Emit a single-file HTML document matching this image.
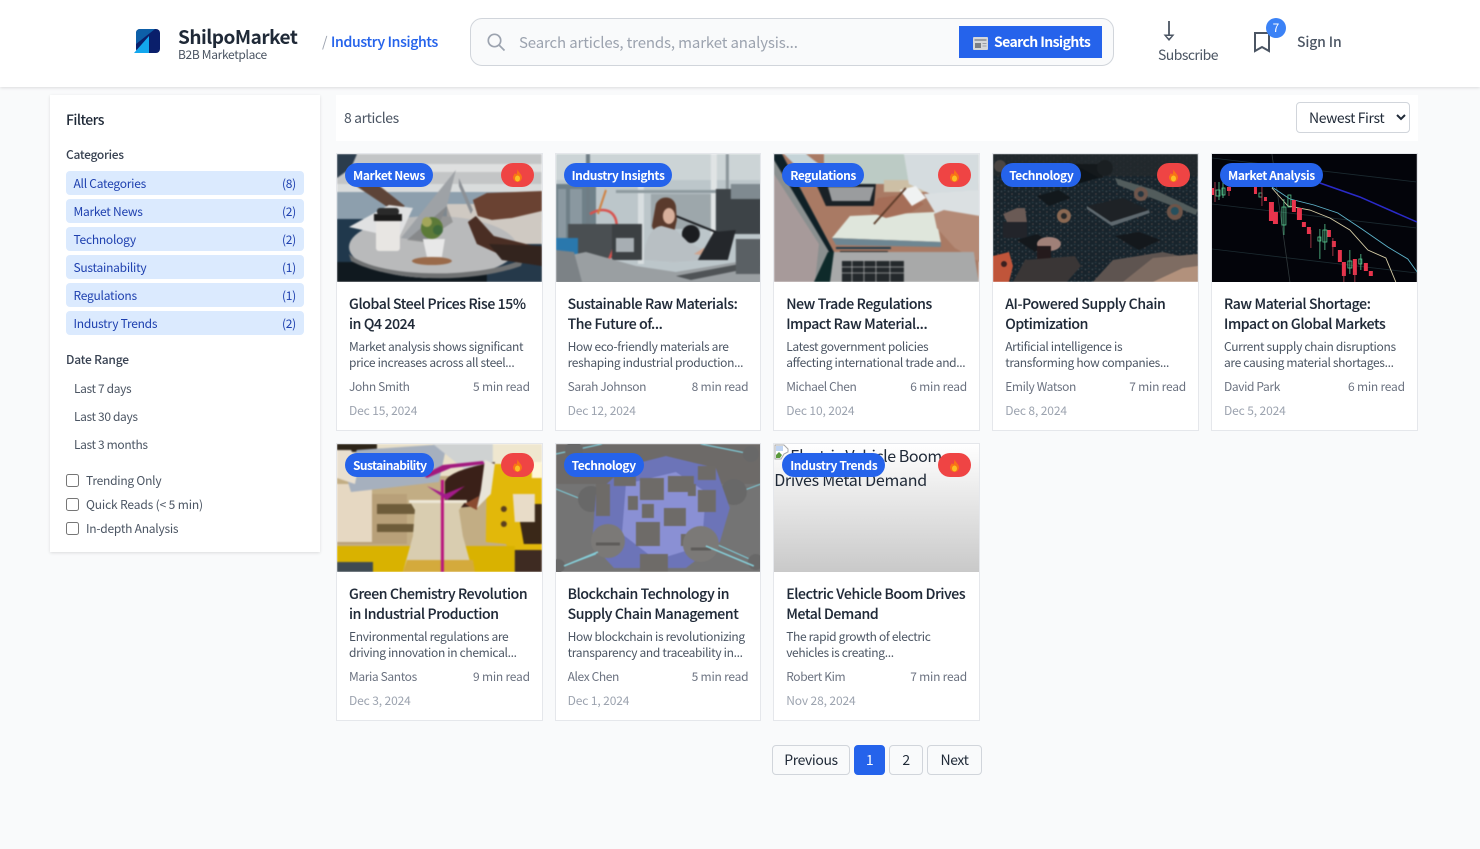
<!DOCTYPE html>
<html lang="en"><head><meta charset="utf-8"><title>Industry Insights - ShilpoMarket</title>
<style>
*{box-sizing:border-box}
html,body{margin:0;padding:0}
body{width:1480px;height:849px;overflow:hidden;position:relative;background:#f9fafb;font-family:"Noto Sans CJK JP","Liberation Sans",sans-serif;color:#1f2937}
.t{position:absolute;white-space:nowrap;line-height:20px}
.hdr{position:absolute;left:0;top:0;width:1480px;height:87px;background:#fff;box-shadow:0 1px 3px rgba(0,0,0,.12)}
.side{position:absolute;left:50px;top:95px;width:270px;height:457px;background:#fff;box-shadow:0 1px 3px rgba(0,0,0,.12)}
.cat{position:absolute;left:66px;width:238px;height:24px;background:#dbeafe;border-radius:4px;color:#1e40af;font-size:12px;line-height:26px;padding:0 8px 0 7.5px;display:flex;justify-content:space-between;letter-spacing:-.25px}
.date{position:absolute;left:74px;font-size:12px;line-height:20px;color:#4b5563;letter-spacing:-.36px}
.lbl{position:absolute;left:86px;font-size:12px;line-height:20px;color:#4b5563;letter-spacing:-.24px}
input[type=checkbox]{position:absolute;left:66px;margin:0;width:13px;height:13px}
.bar{position:absolute;left:336px;top:95px;width:1082px;height:46px;background:#fff}
select{position:absolute;left:1296px;top:102px;width:114px;height:31px;font-size:14px;letter-spacing:-.4px;font-family:inherit;background:#fff;border:1px solid #d1d5db;border-radius:4px;padding:0 0 0 8px;color:#1f2937}
.card{position:absolute;width:206.8px;height:278px;background:#fff;border:1px solid #e5e7eb}
.card svg.ph{position:absolute;left:0;top:0;width:100%;height:128px;display:block}
.img8{position:absolute;left:0;top:0;width:100%;height:128px;background:linear-gradient(#fff,#c9c9c9);overflow:hidden;font-size:16px;line-height:24px;color:#1f2937;letter-spacing:-.26px}
.pill{position:absolute;left:8px;top:9px;height:24px;border-radius:12px;background:#2563eb;color:#fff;font-size:12px;font-weight:700;line-height:25px;padding:0 8px;white-space:nowrap;letter-spacing:-.4px}
.fire{position:absolute;right:8px;top:9px;width:33px;height:24px;border-radius:12px;background:#ef4444}
.fire svg{position:absolute;left:11px;top:6px;width:11px;height:13px}
.ti{position:absolute;left:12px;white-space:nowrap;font-size:14px;font-weight:500;line-height:20px;color:#1f2937;letter-spacing:-.36px;-webkit-text-stroke:.12px #1f2937}
.de{position:absolute;left:12px;white-space:nowrap;font-size:12px;line-height:16px;color:#4b5563;letter-spacing:-.33px}
.au{position:absolute;left:12px;white-space:nowrap;font-size:12px;line-height:16px;color:#6b7280;top:225px;letter-spacing:-.38px}
.rd{position:absolute;right:12px;white-space:nowrap;font-size:12px;line-height:16px;color:#6b7280;top:225px;letter-spacing:-.22px}
.da{position:absolute;left:12px;white-space:nowrap;font-size:12px;line-height:16px;color:#9ca3af;top:249px;letter-spacing:-.12px}
.pg{position:absolute;top:745px;height:30px;border:1px solid #d1d5db;border-radius:4px;background:#f9fafb;font-size:14px;line-height:28px;text-align:center;color:#1f2937;letter-spacing:-.4px}
</style></head><body>

<div class="hdr"></div>
<svg style="position:absolute;left:133px;top:28px" width="28" height="26" viewBox="0 0 28 26"><rect x="3" y="1" width="24" height="24" rx="4" fill="#0a1f6b"/><path d="M3 5a4 4 0 0 1 4-4h15L3 16z" fill="#0d5fa8"/><path d="M1 25L16 8v17z" fill="#13a7ee"/></svg>
<div class="t" style="left:178px;top:27px;font-size:19px;font-weight:700;color:#1f2937;letter-spacing:-.5px">ShilpoMarket</div>
<div class="t" style="left:178px;top:45px;font-size:12px;color:#4b5563;letter-spacing:-.33px">B2B Marketplace</div>
<div class="t" style="left:322px;top:32px;font-size:14px;color:#9ca3af">/</div>
<div class="t" style="left:331px;top:32px;font-size:14px;font-weight:500;color:#2563eb;letter-spacing:-.3px;-webkit-text-stroke:.12px #2563eb">Industry Insights</div>

<div style="position:absolute;left:470px;top:18px;width:644px;height:48px;border:1px solid #d1d5db;border-radius:12px;background:#f9fafb"></div>
<svg style="position:absolute;left:486px;top:32px" width="20" height="20" viewBox="0 0 20 20" fill="none" stroke="#9ca3af" stroke-width="1.7"><circle cx="8.500" cy="8.500" r="6.200"/><path d="M13 13l5.500 5.500"/></svg>
<div class="t" style="left:519px;top:33px;font-size:15px;color:#9ca3af;letter-spacing:-.14px">Search articles, trends, market analysis...</div>
<div style="position:absolute;left:959px;top:26px;width:143px;height:32px;background:#2563eb"></div>
<svg style="position:absolute;left:973px;top:37px" width="15" height="13" viewBox="0 0 15 13"><rect width="15" height="13" rx="1" fill="#d5d7da"/><rect x="1.500" y="2" width="12" height="2" fill="#9a9ea4"/><rect x="2" y="6" width="6" height="5" fill="#7b7f85"/><rect x="9.500" y="6" width="4" height="1" fill="#9a9ea4"/><rect x="9.500" y="8.500" width="4" height="1" fill="#9a9ea4"/></svg>
<div class="t" style="left:994px;top:32px;font-size:14px;font-weight:700;color:#fff;letter-spacing:-.6px">Search Insights</div>

<svg style="position:absolute;left:1162px;top:20px" width="14" height="23" viewBox="0 0 14 23"><path d="M7 1v15" stroke="#4b5563" stroke-width="1.800" fill="none"/><path d="M1.500 14.500h11L7 21z" fill="#4b5563"/><path d="M4.500 16h5L7 18.500z" fill="#fff"/></svg>
<div class="t" style="left:1158px;top:45px;font-size:14px;color:#4b5563;letter-spacing:-.55px">Subscribe</div>
<svg style="position:absolute;left:1253px;top:31px" width="18" height="22" viewBox="0 0 18 22" fill="none" stroke="#4b5563" stroke-width="2"><path d="M2 2h14v18l-7-4-7 4z"/></svg>
<div style="position:absolute;left:1266px;top:18px;width:20px;height:20px;border-radius:50%;background:#3b82f6;color:#fff;font-size:12px;line-height:20px;text-align:center">7</div>
<div class="t" style="left:1297px;top:32px;font-size:14px;font-weight:500;color:#4b5563;letter-spacing:-.15px">Sign In</div>

<div class="side"></div>
<div class="t" style="left:66px;top:110px;font-size:14px;font-weight:500;color:#1f2937;letter-spacing:-.55px">Filters</div>
<div class="t" style="left:66px;top:145px;font-size:12px;font-weight:500;color:#374151;letter-spacing:-.3px">Categories</div>
<div class="cat" style="top:171px"><span>All Categories</span><span>(8)</span></div>
<div class="cat" style="top:199px"><span>Market News</span><span>(2)</span></div>
<div class="cat" style="top:227px"><span>Technology</span><span>(2)</span></div>
<div class="cat" style="top:255px"><span>Sustainability</span><span>(1)</span></div>
<div class="cat" style="top:283px"><span>Regulations</span><span>(1)</span></div>
<div class="cat" style="top:311px"><span>Industry Trends</span><span>(2)</span></div>
<div class="t" style="left:66px;top:350px;font-size:12px;font-weight:500;color:#374151;letter-spacing:-.2px">Date Range</div>
<div class="date" style="top:379px">Last 7 days</div>
<div class="date" style="top:407px">Last 30 days</div>
<div class="date" style="top:435px">Last 3 months</div>
<input type="checkbox" style="top:474px"><div class="lbl" style="top:471px">Trending Only</div>
<input type="checkbox" style="top:498px"><div class="lbl" style="top:495px;letter-spacing:-.14px">Quick Reads (&lt; 5 min)</div>
<input type="checkbox" style="top:522px"><div class="lbl" style="top:519px">In-depth Analysis</div>

<div class="bar"></div>
<div class="t" style="left:344px;top:108px;font-size:14px;color:#4b5563;letter-spacing:-.4px">8 articles</div>
<select><option>Newest First</option></select>

<!-- Card 1 -->
<div class="card" style="left:336px;top:153px">
<svg class="ph" viewBox="0 0 205 128" preserveAspectRatio="none"><g style="filter:blur(.7px)">
<rect width="205" height="128" fill="#c3c5c6"/><rect y="10" width="205" height="8" fill="#dfe0e0"/><rect y="30" width="205" height="8" fill="#d9dcdc"/><rect y="38" width="205" height="30" fill="#8d9fad"/><rect x="110" y="50" width="95" height="40" fill="#cfc9c2"/>
<path d="M0 0h20L14 14 0 24z" fill="#2b3c4c"/><path d="M16 30l14-8 38 30-10 6z" fill="#5d4438"/>
<rect y="65" width="30" height="63" fill="#20384c"/><rect y="108" width="205" height="20" fill="#10191f"/><rect x="150" y="90" width="55" height="38" fill="#25394a"/>
<ellipse cx="96" cy="93" rx="84" ry="31" fill="#b9babb"/><path d="M12 100c30 25 130 25 175 5l-3 7c-50 18-130 16-170-5z" fill="#6f7172"/>
<path d="M12 73L52 51l24 3-14 30z" fill="#e0e1e2"/><path d="M64 84L119 16l-9 36-16 36z" fill="#9ea2a6"/><path d="M110 52l6 16-30 20-16-2z" fill="#707070" opacity=".5"/><path d="M122 24l14 32-2 4-12-28z" fill="#8c9095"/>
<rect x="39" y="62" width="24" height="35" rx="3" fill="#e8e6e3"/><path d="M37 60h28v7H37z" fill="#1a1a1a"/><rect x="40" y="54" width="22" height="7" rx="3" fill="#2a2a2a"/>
<ellipse cx="95" cy="107" rx="20" ry="4" fill="#9a6a4a"/><path d="M86 85h22l-3 18H90z" fill="#e8e8e8"/><circle cx="95" cy="74" r="11" fill="#5c7a38"/><circle cx="90" cy="68" r="5" fill="#a3a65a"/><circle cx="101" cy="76" r="5" fill="#3f6a3a"/>
<path d="M136 46l14-7 55-2v20l-30 7-20 2-14-4z" fill="#6a4232"/><path d="M131 68l8-6 18 20 48 12v18l-30-6-35-16z" fill="#4a2e24"/><path d="M152 90l53 2v20l-40-6z" fill="#33241e"/>
</g></svg>
<div class="pill">Market News</div><div class="fire"><svg viewBox="0 0 11 13"><path d="M5.500 0C6 3 10 5 10 8.500A4.500 4.500 0 0 1 1 8.500C1 6.500 2.500 5.500 3 4c.5 1 1 1.300 1.500 1.300C5 4 5.500 2 5.500 0z" fill="#f97316"/><ellipse cx="5.500" cy="9.500" rx="2.500" ry="3" fill="#fbbf24"/></svg></div>
<div class="ti" style="top:140px">Global Steel Prices Rise 15%</div><div class="ti" style="top:160px">in Q4 2024</div>
<div class="de" style="top:185px">Market analysis shows significant</div><div class="de" style="top:201px">price increases across all steel...</div>
<div class="au">John Smith</div><div class="rd">5 min read</div><div class="da">Dec 15, 2024</div>
</div>

<!-- Card 2 -->
<div class="card" style="left:554.6px;top:153px">
<svg class="ph" viewBox="0 0 205 128" preserveAspectRatio="none"><g style="filter:blur(.7px)">
<rect width="205" height="128" fill="#bcc6ca"/><rect width="205" height="26" fill="#ccd4d6"/><rect x="0" y="30" width="40" height="60" fill="#6f8088"/>
<path d="M2 35h8v50H2zM14 35h12v40H14z" fill="#8a98a0"/><rect x="30" y="0" width="4" height="90" fill="#6f7d85"/>
<rect x="12" y="70" width="50" height="34" fill="#4a4f52"/><rect x="0" y="84" width="22" height="24" fill="#2a78ad"/><path d="M34 60c10-6 22-6 26 6 4 16-4 38-14 50" stroke="#d8524e" stroke-width="2.500" fill="none"/><path d="M50 36l-8 24" stroke="#d08040" stroke-width="2"/>
<rect x="82" y="30" width="6" height="80" fill="#d8dee0"/><rect x="155" y="0" width="6" height="90" fill="#e0e4e5"/><rect x="60" y="36" width="100" height="3" fill="#8e9a9f"/><rect x="170" y="0" width="3" height="80" fill="#8a9499"/>
<rect x="95" y="40" width="60" height="35" fill="#9da7ab"/><rect x="160" y="35" width="45" height="45" fill="#3d4347"/><rect x="175" y="30" width="30" height="15" fill="#7f8a90"/><circle cx="135" cy="80" r="9" fill="#1b1d20"/><path d="M115 60l30 12 20 8" stroke="#15171a" stroke-width="2" fill="none"/>
<path d="M100 50c4-9 18-9 20 2l1 14-4 18h-16l-5-12z" fill="#5a3a2c"/><ellipse cx="113" cy="62" rx="6" ry="8" fill="#d8b09c"/>
<path d="M88 106c0-20 8-34 18-34l14 4 12 12 20 10-4 8-30 2z" fill="#b8bfc3"/><path d="M138 100l10-6h6l-2 8z" fill="#d0a48e"/>
<path d="M142 106l16-28 22-2-8 30z" fill="#24272b"/><rect x="56" y="70" width="30" height="36" fill="#3c4043"/><rect x="60" y="84" width="18" height="14" fill="#a7aeb3"/>
<path d="M0 104l30-6 50 14 40 6 85-14v26H0z" fill="#9a9fa2"/><path d="M0 96l18 2 8 30H0z" fill="#7c8286"/><path d="M120 122l85-16v6l-70 14z" fill="#4f5356"/><rect x="180" y="85" width="25" height="35" fill="#5a6064"/>
</g></svg>
<div class="pill">Industry Insights</div>
<div class="ti" style="top:140px">Sustainable Raw Materials:</div><div class="ti" style="top:160px">The Future of...</div>
<div class="de" style="top:185px">How eco-friendly materials are</div><div class="de" style="top:201px">reshaping industrial production...</div>
<div class="au">Sarah Johnson</div><div class="rd">8 min read</div><div class="da">Dec 12, 2024</div>
</div>

<!-- Card 3 -->
<div class="card" style="left:773.2px;top:153px">
<svg class="ph" viewBox="0 0 205 128" preserveAspectRatio="none"><g style="filter:blur(.7px)">
<rect width="205" height="128" fill="#a97a64"/><rect x="50" width="155" height="30" fill="#bccbc5"/><path d="M110 26h60v12h-60z" fill="#cdbfa5"/>
<path d="M130 0h75v50l-40-6-30-14z" fill="#d5dcdf"/><path d="M0 0h8l53 100-6 28H0z" fill="#8a8f8f"/><path d="M0 20l45 70-4 38H0z" fill="#a79a9a"/><path d="M0 0h8l52 98-3 3L0 6z" fill="#0f2026"/><path d="M10 0h22l18 14H24z" fill="#c5d4d8"/>
<path d="M42 30h60l-2 22H52z" fill="#1a2126"/><path d="M54 33h46l-4 14H58z" fill="#9a9c9e"/>
<path d="M58 84l18-22 85-4 6 30z" fill="#dfe6dc"/><path d="M58 84l109 4v5l-105-2z" fill="#6e8692"/>
<path d="M96 58l8-14 32-4 14 10-12 8-26 6z" fill="#a56e58"/><path d="M126 36l16-4 10 12-14 8z" fill="#f0f2f2"/><path d="M150 40l56-4v26l-44-2z" fill="#dbe0e2"/><path d="M160 60l10-4 36 6v46l-25-14-18-20z" fill="#b48a76"/>
<path d="M100 70l32-36" stroke="#5a3a28" stroke-width="1.800"/>
<path d="M62 94h55" stroke="#1c3a4a" stroke-width="2"/><path d="M66 98h48" stroke="#222" stroke-width="2"/>
<path d="M56 98h144l5 30H40z" fill="#a8a9a9"/><path d="M40 128l14-30h6l-4 30z" fill="#0e2a2a"/><rect x="68" y="107" width="62" height="21" fill="#24292c"/><path d="M68 113h62M68 119h62M78 107v21M90 107v21M102 107v21M116 107v21" stroke="#a8a9a9" stroke-width=".8"/>
</g></svg>
<div class="pill">Regulations</div><div class="fire"><svg viewBox="0 0 11 13"><path d="M5.500 0C6 3 10 5 10 8.500A4.500 4.500 0 0 1 1 8.500C1 6.500 2.500 5.500 3 4c.5 1 1 1.300 1.500 1.300C5 4 5.500 2 5.500 0z" fill="#f97316"/><ellipse cx="5.500" cy="9.500" rx="2.500" ry="3" fill="#fbbf24"/></svg></div>
<div class="ti" style="top:140px">New Trade Regulations</div><div class="ti" style="top:160px">Impact Raw Material...</div>
<div class="de" style="top:185px">Latest government policies</div><div class="de" style="top:201px">affecting international trade and...</div>
<div class="au">Michael Chen</div><div class="rd">6 min read</div><div class="da">Dec 10, 2024</div>
</div>

<!-- Card 4 -->
<div class="card" style="left:992.2px;top:153px">
<svg class="ph" viewBox="0 0 205 128" preserveAspectRatio="none"><defs><pattern id="cb" width="7" height="6" patternUnits="userSpaceOnUse"><rect width="7" height="6" fill="#18242c"/><circle cx="1.500" cy="1.500" r=".7" fill="#4a565c"/><circle cx="5" cy="4" r=".6" fill="#6e5a55"/><rect x="4" y="0" width="1.500" height="1" fill="#2c424c"/></pattern></defs>
<g style="filter:blur(.6px)">
<rect width="205" height="128" fill="url(#cb)"/><rect width="205" height="22" fill="#24292d" opacity=".8"/><rect x="50" y="10" width="60" height="14" fill="#14191c"/><circle cx="112" cy="14" r="8" fill="#1a1f22"/><circle cx="7" cy="12" r="6" fill="#4a4542"/>
<path d="M94 52l36-8 26 12-38 12z" fill="#1e2226"/><path d="M94 52l24 16 38-12 1 3-38 13-25-17z" fill="#5e686e"/>
<path d="M122 24l40 12 43 20-2 5-78-30z" fill="#525c5c"/><circle cx="148" cy="40" r="7" fill="#6e564c"/><circle cx="148" cy="40" r="3" fill="#253540"/><circle cx="182" cy="58" r="8" fill="#6e5448"/><circle cx="182" cy="57" r="4" fill="#26505e"/><circle cx="71" cy="62" r="7" fill="#8a6852"/><circle cx="71" cy="62" r="3" fill="#2a2a2a"/>
<path d="M44 42l22-6 12 8-22 8z" fill="#12181c"/><path d="M58 18l30-4 18 10-30 8z" fill="#0e1418"/>
<path d="M122 82l24-4 22 8-22 10z" fill="#14181c"/><path d="M10 60l14-6h8l2 14H14z" fill="#6a5a55"/><path d="M10 68h24v16H10z" fill="#22242a"/>
<path d="M24 86l20-6 14 8-16 10z" fill="#14181c"/><ellipse cx="56" cy="90" rx="12" ry="7" fill="#a08078"/><path d="M44 92h14v16H44z" fill="#241a1c"/>
<path d="M0 102l16-4 4 14-4 16H0z" fill="#c0553a"/><circle cx="11" cy="110" r="3" fill="#3a2020"/>
<path d="M20 128l12-22 50-4 6 10-14 16z" fill="#3a3636"/><path d="M100 128l20-22 50-8 35 8v22z" fill="#5e5450"/><path d="M130 128l30-24 45-4v28z" fill="#7e6c62"/><path d="M160 128l30-14 15-2v16z" fill="#b2917c"/>
</g></svg>
<div class="pill">Technology</div><div class="fire"><svg viewBox="0 0 11 13"><path d="M5.500 0C6 3 10 5 10 8.500A4.500 4.500 0 0 1 1 8.500C1 6.500 2.500 5.500 3 4c.5 1 1 1.300 1.500 1.300C5 4 5.500 2 5.500 0z" fill="#f97316"/><ellipse cx="5.500" cy="9.500" rx="2.500" ry="3" fill="#fbbf24"/></svg></div>
<div class="ti" style="top:140px">AI-Powered Supply Chain</div><div class="ti" style="top:160px">Optimization</div>
<div class="de" style="top:185px">Artificial intelligence is</div><div class="de" style="top:201px">transforming how companies...</div>
<div class="au">Emily Watson</div><div class="rd">7 min read</div><div class="da">Dec 8, 2024</div>
</div>

<!-- Card 5 -->
<div class="card" style="left:1211px;top:153px">
<svg class="ph" viewBox="0 0 205 128" preserveAspectRatio="none">
<rect width="205" height="128" fill="#03040a"/>
<path d="M0 4l205 24M0 50l205 24M0 95l205 24" stroke="#1b2a30" stroke-width=".8"/><path d="M60 0l18 128" stroke="#30393c" stroke-width=".8"/>
<path d="M108 29l40 14 57 25" stroke="#2a2ac8" stroke-width="1.500" fill="none"/>
<path d="M60 33l18 12 24 6 24 8 24 16 26 18 20 12 10 14" stroke="#5fb5cc" stroke-width=".9" fill="none"/>
<path d="M60 34l16 18 22 4 20 8 20 12 18 20 18 8 10 24" stroke="#d8cfa8" stroke-width=".9" fill="none"/>
<g fill="#e8344c"><rect x="57" y="48" width="5" height="19"/><rect x="61" y="58" width="5" height="12"/><rect x="80" y="46" width="4" height="12"/><rect x="85" y="54" width="5" height="12"/><rect x="90" y="68" width="4" height="5"/><rect x="95" y="73" width="4" height="7"/><rect x="115" y="76" width="4" height="7"/><rect x="120" y="87" width="4" height="6"/><rect x="126" y="96" width="4" height="12"/><rect x="130" y="108" width="4" height="14"/><rect x="141" y="105" width="4" height="16"/><rect x="152" y="109" width="4" height="8"/><rect x="157" y="117" width="4" height="5"/><rect x="0" y="34" width="2" height="7"/><rect x="15" y="33" width="4" height="4"/><rect x="42" y="33" width="3" height="7"/><rect x="52" y="43" width="3" height="4"/></g>
<g fill="none" stroke="#58c890" stroke-width=".8"><rect x="70" y="53" width="4" height="18"/><rect x="76" y="41" width="3" height="12"/><rect x="111" y="76" width="4" height="12"/><rect x="106" y="83" width="3" height="4"/><rect x="136" y="107" width="4" height="7"/><rect x="147" y="105" width="3" height="5"/><rect x="47" y="39" width="3" height="4"/><rect x="4" y="36" width="4" height="6"/><rect x="10" y="34" width="3" height="7"/><path d="M72 45v36M108 75v30M113 70v26M138 96v24M149 100v16M7 28v18M11 26v18"/></g>
<g stroke="#c04050" stroke-width=".8"><path d="M3 28v20M17 30v12M50 30v22M99 76v18M121 84v18M132 120v8M143 118v10"/></g>
</svg>
<div class="pill">Market Analysis</div>
<div class="ti" style="top:140px">Raw Material Shortage:</div><div class="ti" style="top:160px">Impact on Global Markets</div>
<div class="de" style="top:185px">Current supply chain disruptions</div><div class="de" style="top:201px">are causing material shortages...</div>
<div class="au">David Park</div><div class="rd">6 min read</div><div class="da">Dec 5, 2024</div>
</div>

<!-- Card 6 -->
<div class="card" style="left:336px;top:443px">
<svg class="ph" viewBox="0 0 205 128" preserveAspectRatio="none"><g style="filter:blur(.7px)">
<rect width="205" height="128" fill="#c2ad84"/><rect x="0" width="205" height="32" fill="#e8dfc8"/><rect y="0" width="40" height="8" fill="#2d2418"/><rect x="150" width="55" height="20" fill="#efe7cf"/>
<path d="M0 50h70v50H0z" fill="#b8a079"/><path d="M40 60h50v10H40zM40 80h40v8H40z" fill="#6e5c3a"/><rect x="0" y="40" width="35" height="58" fill="#e6d8c2"/>
<path d="M150 20h55v90h-30l-6-10-20-2z" fill="#e2b80a"/><path d="M195 18h10v16h-10z" fill="#fff7d8"/><circle cx="167" cy="65" r="3" fill="#5a3f20"/><circle cx="167" cy="80" r="3" fill="#5a3f20"/><path d="M180 60h25v40h-18z" fill="#3a2818"/><path d="M176 50h22v28h-20z" fill="#e8dcc8"/>
<rect y="102" width="178" height="26" fill="#d9b200"/><rect x="178" y="106" width="27" height="22" fill="#3e2b22"/><rect y="118" width="36" height="10" fill="#3e4a52"/>
<path d="M8 28l12-22L110 0l-8 38-88 10z" fill="#a6b0be"/><path d="M0 6h14l8 14-4 20-18-6z" fill="#e9dfcf"/><path d="M96 0h60v20l-10 20z" fill="#cfd2d2"/>
<path d="M108 38c4-12 40-18 50-20l-4 30-14 14-22 2-10-8z" fill="#3a2018"/><path d="M90 34l24-10 34-4-2-3-40 4-20 10z" fill="#a2187e"/><path d="M128 60l14-8-2 14z" fill="#8a4a30"/><path d="M148 16l10 4-4 30-14 14 4-18z" fill="#e8e4d8"/>
<path d="M72 56h58l-8 10 4 26 10 36H66l10-36 2-26z" fill="#d9cdb0"/><path d="M72 56h58v3H72z" fill="#eee7d6"/><path d="M70 116h66l2 12H66z" fill="#d4aa3c"/>
<path d="M104 36h3v92h-3z" fill="#b8147e"/><path d="M90 42l18 8 20-8-18 14z" fill="#a31a8a"/>
</g></svg>
<div class="pill" style="letter-spacing:-.6px">Sustainability</div><div class="fire"><svg viewBox="0 0 11 13"><path d="M5.500 0C6 3 10 5 10 8.500A4.500 4.500 0 0 1 1 8.500C1 6.500 2.500 5.500 3 4c.5 1 1 1.300 1.500 1.300C5 4 5.500 2 5.500 0z" fill="#f97316"/><ellipse cx="5.500" cy="9.500" rx="2.500" ry="3" fill="#fbbf24"/></svg></div>
<div class="ti" style="top:140px">Green Chemistry Revolution</div><div class="ti" style="top:160px">in Industrial Production</div>
<div class="de" style="top:185px">Environmental regulations are</div><div class="de" style="top:201px">driving innovation in chemical...</div>
<div class="au">Maria Santos</div><div class="rd">9 min read</div><div class="da">Dec 3, 2024</div>
</div>

<!-- Card 7 -->
<div class="card" style="left:554.6px;top:443px">
<svg class="ph" viewBox="0 0 205 128" preserveAspectRatio="none"><g style="filter:blur(.6px)">
<rect width="205" height="128" fill="#747474"/><rect width="205" height="40" fill="#6d6a68"/>
<g stroke="#7ec8d4" stroke-width="1.200" fill="none"><path d="M0 10L46 0M145 0l50 10M0 45l30 12M165 55l40-15M0 125l40-15M160 100l45 20"/></g>
<g fill="#686868"><circle cx="35" cy="55" r="13"/><circle cx="178" cy="48" r="13"/><circle cx="18" cy="6" r="9"/><circle cx="195" cy="10" r="8"/><circle cx="2" cy="122" r="7"/><circle cx="200" cy="118" r="8"/></g>
<path d="M40 50l30-28 40-10 50 12 14 40-10 34-34 26H58L36 100z" fill="#6c74b8"/><path d="M70 40l50-12 30 20-4 54-46 14-34-26z" fill="#8a90d4"/>
<g fill="#6e6b68"><rect x="40" y="40" width="14" height="32"/><rect x="58" y="26" width="22" height="16"/><rect x="72" y="52" width="10" height="14"/><rect x="84" y="34" width="24" height="22"/><rect x="112" y="32" width="26" height="16"/><rect x="86" y="60" width="12" height="14"/><rect x="108" y="64" width="22" height="18"/><rect x="142" y="46" width="18" height="22"/><rect x="142" y="22" width="18" height="14"/><rect x="80" y="78" width="24" height="24"/><rect x="125" y="90" width="14" height="12"/><rect x="84" y="110" width="28" height="18"/><rect x="132" y="40" width="8" height="12"/></g>
<g fill="#7b7977"><circle cx="52" cy="97" r="17"/><circle cx="145" cy="100" r="18"/></g><path d="M40 100h24M135 105h20" stroke="#5e5c5a" stroke-width="3"/>
<path d="M8 122l34-14M150 102l48 20" stroke="#86ccd6" stroke-width="1.500"/>
</g></svg>
<div class="pill">Technology</div>
<div class="ti" style="top:140px">Blockchain Technology in</div><div class="ti" style="top:160px">Supply Chain Management</div>
<div class="de" style="top:185px">How blockchain is revolutionizing</div><div class="de" style="top:201px">transparency and traceability in...</div>
<div class="au">Alex Chen</div><div class="rd">5 min read</div><div class="da">Dec 1, 2024</div>
</div>

<!-- Card 8 -->
<div class="card" style="left:773.2px;top:443px">
<div class="img8"><svg style="position:absolute;left:0;top:0" width="16" height="16" viewBox="0 0 16 16"><path d="M1 1h9l4 4v3l-4 2-3 5H1z" fill="#fff" stroke="#a8a8a8"/><path d="M2 11l3-3 3 3-2 3H2z" fill="#5a9a3c"/><path d="M2 2h7v5H2z" fill="#c0d4f2"/></svg><div style="position:absolute;left:0;top:-1px;width:204px;white-space:normal"><span style="letter-spacing:-.45px"><span style="display:inline-block;width:16px"></span>Electric Vehicle Boom</span><br>Drives Metal Demand</div></div>
<div class="pill">Industry Trends</div><div class="fire"><svg viewBox="0 0 11 13"><path d="M5.500 0C6 3 10 5 10 8.500A4.500 4.500 0 0 1 1 8.500C1 6.500 2.500 5.500 3 4c.5 1 1 1.300 1.500 1.300C5 4 5.500 2 5.500 0z" fill="#f97316"/><ellipse cx="5.500" cy="9.500" rx="2.500" ry="3" fill="#fbbf24"/></svg></div>
<div class="ti" style="top:140px">Electric Vehicle Boom Drives</div><div class="ti" style="top:160px">Metal Demand</div>
<div class="de" style="top:185px">The rapid growth of electric</div><div class="de" style="top:201px">vehicles is creating...</div>
<div class="au">Robert Kim</div><div class="rd">7 min read</div><div class="da">Nov 28, 2024</div>
</div>

<div class="pg" style="left:772px;width:78px">Previous</div>
<div class="pg" style="left:854px;width:31px;background:#2563eb;border-color:#2563eb;color:#fff">1</div>
<div class="pg" style="left:889px;width:34px">2</div>
<div class="pg" style="left:927px;width:55px">Next</div>
</body></html>
